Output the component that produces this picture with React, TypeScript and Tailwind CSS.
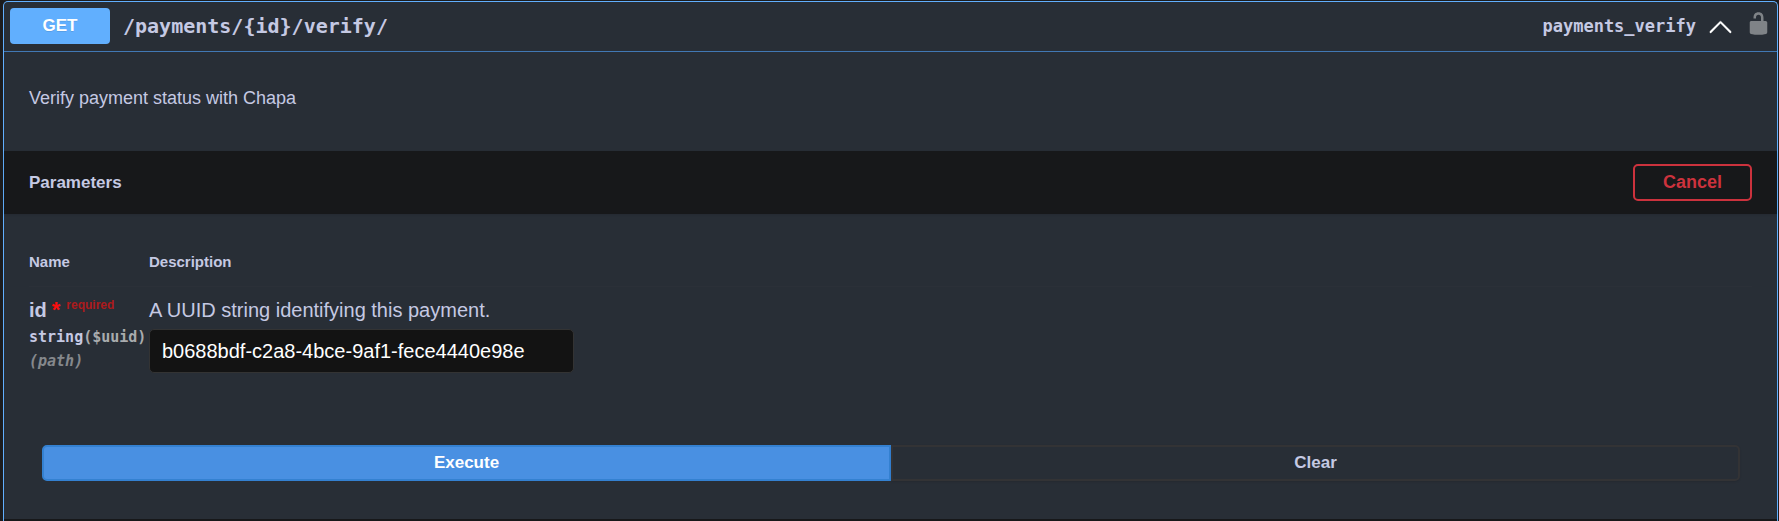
import { useState } from "react";

function Chevron() {
  return (
    <svg viewBox="0 0 20 20" className="h-[25px] w-[25px]" fill="#fff" stroke="#fff" strokeWidth="0.3" aria-hidden="true">
      <path d="M17.418 14.908c.272.281.709.281.979 0s.271-.742 0-1.021l-7.908-7.83a.69.69 0 0 0-.979 0l-7.908 7.83c-.27.279-.271.74 0 1.021s.71.281.979 0L10 7.41z" />
    </svg>
  );
}

function Unlocked() {
  return (
    <svg viewBox="0 0 20 20" className="h-[25px] w-[25px]" fill="#7f8387" aria-hidden="true">
      <path d="M15.8 8H14V5.6C14 2.703 12.665 1 10 1 7.334 1 6 2.703 6 5.6V6h2v-.801C8 3.754 8.797 3 10 3c1.203 0 2 .754 2 2.199V8H4c-.553 0-1 .646-1 1.199V17c0 .549.428 1.139.951 1.307l1.197.387C5.672 18.861 6.55 19 7.1 19h5.8c.549 0 1.428-.139 1.951-.307l1.196-.387c.524-.167.953-.757.953-1.306V9.199C17 8.646 16.352 8 15.8 8z" />
    </svg>
  );
}

export default function App() {
  const [id, setId] = useState("b0688bdf-c2a8-4bce-9af1-fece4440e98e");
  return (
    <main className="bg-[#1c1c1e] pt-px pr-px pl-[3px] font-['Liberation_Sans',Arial,sans-serif] text-[#c5c9e3]">
      <section className="rounded-t-[5px] border border-b-0 border-[#61affe] bg-[#282e36]">
        <header className="flex items-center border-b border-[#4178b4] px-[6px] pt-[6px] pb-[7px]">
          <button className="flex min-w-0 flex-1 items-center text-left">
            <span className="w-[100px] rounded bg-[#61affe] text-center text-[17px] leading-9 font-bold text-white [text-shadow:0_1px_0_rgba(0,0,0,0.1)]">
              GET
            </span>
            <span className="flex-1 px-[13px] font-['DejaVu_Sans_Mono',monospace] text-[20px] leading-9 font-bold">
              /payments/{"{id}"}/verify/
            </span>
            <span className="pr-3 font-['DejaVu_Sans_Mono',monospace] text-[17px] leading-9 font-bold">
              payments_verify
            </span>
            <Chevron />
          </button>
          <button aria-label="Authorize" className="ml-[13px] pb-[6px]">
            <Unlocked />
          </button>
        </header>

        <p className="px-[25px] pt-[34px] pb-[41px] text-[18px] leading-6">
          Verify payment status with Chapa
        </p>

        <div className="flex items-center justify-between bg-[#17181a] px-[25px] py-[13px] shadow-[0_1px_2px_rgba(0,0,0,0.1)]">
          <h4 className="text-[17px] leading-6 font-bold">Parameters</h4>
          <button className="rounded-[5px] border-2 border-[#cc323d] px-7 text-[18px] leading-[33px] font-bold text-[#cc323d]">
            Cancel
          </button>
        </div>

        <div className="px-[25px] pt-[25px]">
          <table className="w-full border-collapse">
            <thead>
              <tr className="border-b border-[#2b3038] text-left text-[15px] leading-[18px]">
                <th className="w-[120px] pt-[14px] pb-[15px] font-bold">Name</th>
                <th className="pt-[14px] pb-[15px] font-bold">Description</th>
              </tr>
            </thead>
            <tbody>
              <tr className="align-top">
                <td className="pt-[11px] whitespace-nowrap">
                  <label htmlFor="payment-id" className="flex text-[20px] leading-6 font-bold">
                    id
                    <span className="pl-[5px] text-[22px] text-[#fb0e0e]">*</span>
                    <span className="pl-[6px] text-[12px] leading-[14px] text-[#ad1a1c]">required</span>
                  </label>
                  <div className="pt-[3px] font-['DejaVu_Sans_Mono',monospace] text-[15px] leading-6 font-bold">
                    string<span className="text-[#a9abae]">($uuid)</span>
                  </div>
                  <div className="font-['DejaVu_Sans_Mono',monospace] text-[15px] leading-6 font-bold text-[#85888c] italic">
                    (path)
                  </div>
                </td>
                <td className="pt-[11px]">
                  <p className="text-[20px] leading-6">A UUID string identifying this payment.</p>
                  <input
                    id="payment-id"
                    value={id}
                    onChange={(event) => setId(event.target.value)}
                    className="mt-[7px] block h-11 w-[425px] rounded-[5px] border border-[#333333] bg-[#131313] px-3 text-[20px] text-white outline-none"
                  />
                </td>
              </tr>
            </tbody>
          </table>
        </div>

        <div className="mt-[72px] flex pr-[37px] pl-[38px] pb-[38px] text-[17px] leading-8 font-bold">
          <button className="flex-1 rounded-l-[5px] border-2 border-[#3481d1] bg-[#4990e2] text-white">
            Execute
          </button>
          <button className="flex-1 rounded-r-[5px] border-2 border-[#333335] shadow-[0_1px_2px_rgba(0,0,0,0.1)]">
            Clear
          </button>
        </div>
        <div className="h-[2px] bg-[#17181a]" />
      </section>
    </main>
  );
}
